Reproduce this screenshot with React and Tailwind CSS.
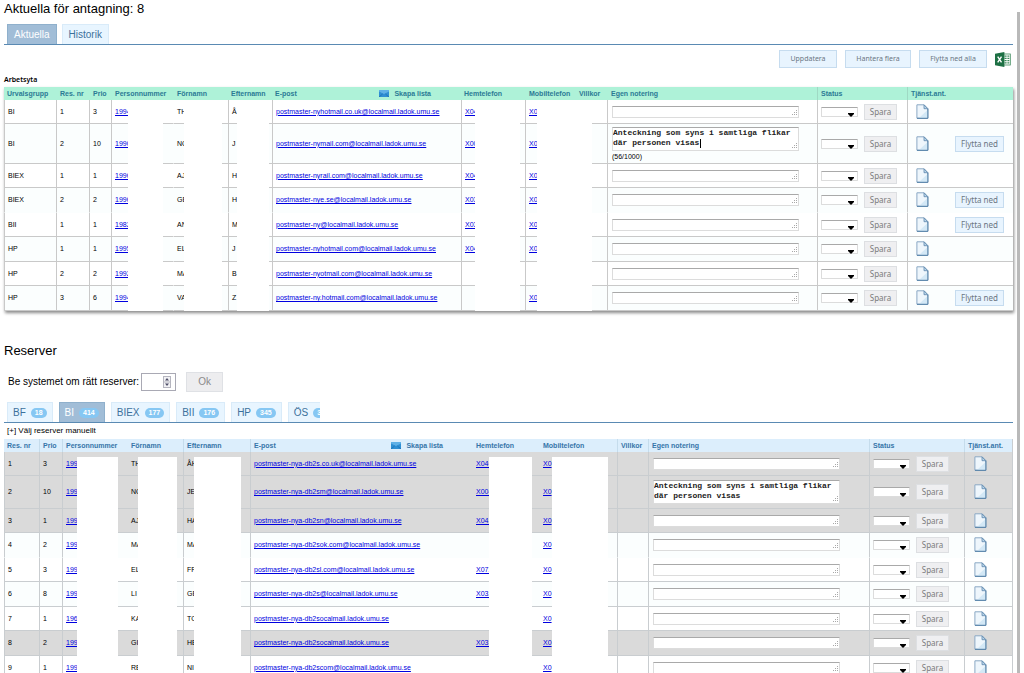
import { useState } from 'react'

const NOTE = 'Anteckning som syns i samtliga flikar\ndär personen visas'

const workRows = [
  { group: 'BI', nr: 1, prio: 3, pnr: '1994', first: 'TH', last: 'Å', mail: 'postmaster-nyhotmail.co.uk@localmail.ladok.umu.se', home: 'X04', mobile: 'X0' },
  { group: 'BI', nr: 2, prio: 10, pnr: '1990', first: 'NO', last: 'J', mail: 'postmaster-nymail.com@localmail.ladok.umu.se', home: 'X00', mobile: 'X0', note: NOTE, count: '(56/1000)', move: true },
  { group: 'BIEX', nr: 1, prio: 1, pnr: '1996', first: 'AJ', last: 'H', mail: 'postmaster-nyrail.com@localmail.ladok.umu.se', home: 'X04', mobile: 'X0' },
  { group: 'BIEX', nr: 2, prio: 2, pnr: '1996', first: 'GE', last: 'H', mail: 'postmaster-nye.se@localmail.ladok.umu.se', home: 'X03', mobile: 'X0', move: true, noLine: true },
  { group: 'BII', nr: 1, prio: 1, pnr: '1982', first: 'AN', last: 'M', mail: 'postmaster-ny@localmail.ladok.umu.se', home: 'X03', mobile: 'X0', move: true },
  { group: 'HP', nr: 1, prio: 1, pnr: '1995', first: 'EL', last: 'J', mail: 'postmaster-nyhotmail.com@localmail.ladok.umu.se', home: 'X04', mobile: 'X0' },
  { group: 'HP', nr: 2, prio: 2, pnr: '1992', first: 'MA', last: 'B', mail: 'postmaster-nyotmail.com@localmail.ladok.umu.se', home: '', mobile: '' },
  { group: 'HP', nr: 3, prio: 6, pnr: '1994', first: 'VA', last: 'Z', mail: 'postmaster-ny.hotmail.com@localmail.ladok.umu.se', home: '', mobile: 'X0', move: true },
]

const reserveRows = [
  { nr: 1, prio: 3, pnr: '199', first: 'TH', last: 'ÅH', mail: 'postmaster-nya-db2s.co.uk@localmail.ladok.umu.se', home: 'X046', mobile: 'X0', gray: true },
  { nr: 2, prio: 10, pnr: '199', first: 'NO', last: 'JE', mail: 'postmaster-nya-db2sm@localmail.ladok.umu.se', home: 'X004', mobile: 'X0', note: NOTE, gray: true },
  { nr: 3, prio: 1, pnr: '199', first: 'AJ', last: 'HA', mail: 'postmaster-nya-db2sn@localmail.ladok.umu.se', home: 'X042', mobile: 'X0', gray: true },
  { nr: 4, prio: 2, pnr: '199', first: 'MA', last: 'MA', mail: 'postmaster-nya-db2sok.com@localmail.ladok.umu.se', home: '', mobile: 'X0', noLine: true },
  { nr: 5, prio: 3, pnr: '199', first: 'EL', last: 'FR', mail: 'postmaster-nya-db2sl.com@localmail.ladok.umu.se', home: 'X072', mobile: 'X0' },
  { nr: 6, prio: 8, pnr: '199', first: 'LI', last: 'GE', mail: 'postmaster-nya-db2s@localmail.ladok.umu.se', home: 'X032', mobile: 'X0' },
  { nr: 7, prio: 1, pnr: '196', first: 'KA', last: 'TO', mail: 'postmaster-nya-db2socalmail.ladok.umu.se', home: '', mobile: 'X0' },
  { nr: 8, prio: 2, pnr: '199', first: 'GI', last: 'HE', mail: 'postmaster-nya-db2socalmail.ladok.umu.se', home: 'X035', mobile: 'X0', gray: true },
  { nr: 9, prio: 1, pnr: '199', first: 'RE', last: 'NI', mail: 'postmaster-nya-db2scom@localmail.ladok.umu.se', home: '', mobile: 'X0' },
]

const groups = [
  { name: 'BF', count: 18 },
  { name: 'BI', count: 414 },
  { name: 'BIEX', count: 177 },
  { name: 'BII', count: 176 },
  { name: 'HP', count: 345 },
  { name: 'ÖS', count: 312 },
]

function MailIcon() {
  return (
    <svg width="10" height="7" viewBox="0 0 10 7" aria-hidden="true">
      <rect width="10" height="7" fill="#2f8fd3" />
      <path d="M0 0h10v1.5L5 4 0 1.5z" fill="#5fb0e6" />
      <path d="M0 7l3.6-3M10 7L6.4 4" stroke="#1b6bb0" strokeWidth=".7" />
    </svg>
  )
}

function DocIcon() {
  return (
    <svg width="13" height="15" viewBox="0 0 13 15" className="mb-px block" aria-hidden="true">
      <path d="M.9.8h7.3l3.6 3.8v9.6H.9z" fill="#eef6fc" stroke="#8aa9c4" />
      <path d="M3 14l8.6-8v8z" fill="#d3e8f6" />
      <path d="M11.9 4.8v9.5H1" fill="none" stroke="#4f7da5" />
      <path d="M8 .9v3.8h3.8z" fill="#b9d5ea" stroke="#5f88ad" strokeWidth=".8" />
    </svg>
  )
}

function ExcelIcon() {
  return (
    <svg width="16" height="15" viewBox="0 0 16 15" className="block" aria-hidden="true">
      <rect x="8" y="2" width="7.3" height="11" fill="#fff" stroke="#3c8a5c" strokeWidth=".8" />
      <path d="M9.5 4.2h4.8M9.5 6.4h4.8M9.5 8.6h4.8M9.5 10.8h4.8" stroke="#3c8a5c" strokeWidth="1.2" />
      <path d="M12 3v9" stroke="#fff" strokeWidth=".8" />
      <path d="M0 1.7L9.4 0v15L0 13.3z" fill="#1d7044" />
      <path d="M2.7 4.7l3.8 5.6M6.5 4.7l-3.8 5.6" stroke="#fff" strokeWidth="1.4" />
    </svg>
  )
}

// white strip over personal data
function Mask({ className }) {
  return <span className={`absolute -bottom-px z-10 bg-white ${className}`} />
}

function Note({ id, row, cursor }) {
  const [text, setText] = useState(row.note || '')
  return (
    <div className="pl-px">
      <div className="relative w-[187px]">
        <textarea
          aria-label={`Egen notering ${id}`}
          value={text}
          onChange={(e) => setText(e.target.value)}
          className={`block w-full resize-none overflow-hidden border border-[#dcdcdc] border-t-[#a9a9a9] bg-white font-['Liberation_Mono',monospace] text-[8px] leading-[10px] font-bold text-[#222] outline-none ${row.note ? 'h-6' : 'h-3'}`}
        />
        {cursor && <span className="absolute top-3 left-[88px] h-[9px] w-px bg-black" />}
        <svg width="7" height="7" viewBox="0 0 7 7" className="pointer-events-none absolute right-px bottom-0.5" aria-hidden="true">
          <path d="M5 1.5h1M3 3.5h1M5 3.5h1M1 5.5h1M3 5.5h1M5 5.5h1" stroke="#a8a8a8" />
        </svg>
      </div>
      {row.count && <div className="pt-px text-[7px] leading-[9px]">{row.count}</div>}
    </div>
  )
}

function Status({ id }) {
  return (
    <div className="flex items-center gap-1.5">
      <div className="relative w-[37px]">
        <select aria-label={`Status ${id}`} className="block h-2.5 w-full appearance-none rounded-[1px] border border-[#dcdcdc] border-t-[#a9a9a9] bg-white text-[7px]">
          <option></option>
        </select>
        <svg width="6" height="4" viewBox="0 0 6 4" className="pointer-events-none absolute right-1 bottom-0" aria-hidden="true">
          <path d="M0 0h6v1L3 4 0 1z" fill="#000" />
        </svg>
      </div>
      <button className="h-4 w-[33px] border border-[#dddfe2] bg-[#efeff1] font-['Noto_Sans',sans-serif] text-[8px] leading-none text-[#7b7b7b]">Spara</button>
    </div>
  )
}

function MailHeader() {
  return (
    <div className="flex items-center justify-between pr-[30px]">
      E-post
      <a href="#lista" className="flex items-center gap-[5px]">
        <MailIcon />
        Skapa lista
      </a>
    </div>
  )
}

const th = 'h-[13px] pl-[3px] text-left font-bold whitespace-nowrap'
const link = 'text-[#0000e0] underline'

function WorkTable() {
  const line = 'border-l border-[#c9c9c9]'
  return (
    <table className="w-full table-fixed border-separate border-spacing-0 text-[7px] leading-[10px] shadow-[1px_2px_3px_#8a8a8a]">
      <colgroup>
        <col className="w-[52px]" />
        <col className="w-[33px]" />
        <col className="w-[22px]" />
        <col className="w-[62px]" />
        <col className="w-[55px]" />
        <col className="w-[44px]" />
        <col className="w-[189px]" />
        <col className="w-[64px]" />
        <col className="w-[51px]" />
        <col className="w-[31px]" />
        <col />
        <col className="w-[90px]" />
        <col className="w-[106px]" />
      </colgroup>
      <thead className="bg-[#aef2d8] text-[#2b7a95]">
        <tr>
          <th className={th}>Urvalsgrupp</th>
          <th className={`${th} border-l border-transparent`}>Res. nr</th>
          <th className={`${th} border-l border-transparent`}>Prio</th>
          <th className={`${th} border-l border-transparent`}>Personnummer</th>
          <th className={`${th} border-l border-transparent`}>Förnamn</th>
          <th className={th}>Efternamn</th>
          <th className={th}><MailHeader /></th>
          <th className={th}>Hemtelefon</th>
          <th className={`${th} border-l border-transparent`}>Mobiltelefon</th>
          <th className={th}>Villkor</th>
          <th className={`${th} border-l border-transparent`}>Egen notering</th>
          <th className={`${th} border-l border-[#9fd9c4]`}>Status</th>
          <th className={`${th} border-l border-[#9fd9c4]`}>Tjänst.ant.</th>
        </tr>
      </thead>
      <tbody>
        {workRows.map((row, i) => {
          const td = `relative h-full border-b p-0 pl-[3px] ${row.noLine ? 'border-b-transparent' : 'border-b-[#c9c9c9]'}`
          return (
            <tr key={i} className={`${row.note ? 'h-10' : 'h-6 even:h-[25px]'} bg-white even:bg-[#fbfefe]`}>
              <td className={`${td} ${line}`}>{row.group}</td>
              <td className={`${td} ${line}`}>{row.nr}</td>
              <td className={`${td} ${line}`}>{row.prio}</td>
              <td className={`${td} ${line}`}>
                <a href="#person" className={link}>{row.pnr}</a>
                <Mask className="top-0 left-4 w-[35px]" />
              </td>
              <td className={`${td} border-l border-l-transparent`}>
                {row.first}
                <Mask className="top-0 left-2.5 w-[38px]" />
              </td>
              <td className={`${td} ${line}`}>
                {row.last}
                <Mask className="top-0 left-2 w-8" />
              </td>
              <td className={`${td} ${line} whitespace-nowrap`}><a href="#mail" className={link}>{row.mail}</a></td>
              <td className={`${td} ${line}`}>
                <a href="#hem" className={link}>{row.home}</a>
                <Mask className="top-0 left-[13px] w-[45px]" />
              </td>
              <td className={`${td} ${line}`}>
                <a href="#mobil" className={link}>{row.mobile}</a>
                <Mask className="top-0 left-[11px] w-[55px]" />
              </td>
              <td className={td}></td>
              <td className={`${td} ${line}`}><Note id={`arbetsyta ${i + 1}`} row={row} cursor={!!row.count} /></td>
              <td className={`${td} ${line}`}><Status id={`arbetsyta ${i + 1}`} /></td>
              <td className={`${td} ${line}`}>
                <div className="flex items-center justify-between pr-[9px] pl-[5px]">
                  <button aria-label="Tjänsteanteckning"><DocIcon /></button>
                  {row.move && (
                    <button className="h-4 w-[49px] border border-[#c6dcef] bg-[#e8f4fe] font-['Noto_Sans',sans-serif] text-[8px] leading-none text-[#6b7683]">Flytta ned</button>
                  )}
                </div>
              </td>
            </tr>
          )
        })}
      </tbody>
    </table>
  )
}

function ReserveTable() {
  const line = 'border-l border-[#c9cdd0]'
  const head = `${th} border-l border-[#c5dcec]`
  return (
    <table className="w-full table-fixed border-separate border-spacing-0 border-r border-[#c9cdd0] text-[7px] leading-[10px]">
      <colgroup>
        <col className="w-[35px]" />
        <col className="w-[23px]" />
        <col className="w-[66px]" />
        <col className="w-[55px]" />
        <col className="w-[67px]" />
        <col className="w-[223px]" />
        <col className="w-[67px]" />
        <col className="w-[77px]" />
        <col className="w-[31px]" />
        <col />
        <col className="w-[95px]" />
        <col className="w-[48px]" />
      </colgroup>
      <thead className="bg-[#dceefc] text-[#3675a9]">
        <tr>
          <th className={th}>Res. nr</th>
          <th className={head}>Prio</th>
          <th className={head}>Personnummer</th>
          <th className={th}>Förnamn</th>
          <th className={head}>Efternamn</th>
          <th className={head}><MailHeader /></th>
          <th className={th}>Hemtelefon</th>
          <th className={th}>Mobiltelefon</th>
          <th className={head}>Villkor</th>
          <th className={head}>Egen notering</th>
          <th className={head}>Status</th>
          <th className={head}>Tjänst.ant.</th>
        </tr>
      </thead>
      <tbody>
        {reserveRows.map((row, i) => {
          const td = `relative h-full border-b p-0 pl-[3px] ${row.noLine ? 'border-b-transparent' : 'border-b-[#c9cdd0]'}`
          const top = i === 0 ? 'top-[5px]' : 'top-0'
          const bg = row.gray ? 'bg-[#dadada]' : 'bg-white even:bg-[#fbfefe]'
          return (
            <tr key={row.nr} className={`${row.note ? 'h-[33px]' : 'h-6 even:h-[25px]'} ${bg}`}>
              <td className={`${td} ${line}`}>{row.nr}</td>
              <td className={`${td} ${line}`}>{row.prio}</td>
              <td className={`${td} ${line}`}>
                <a href="#person" className={link}>{row.pnr}</a>
                <Mask className={`${top} left-3.5 w-[41px]`} />
              </td>
              <td className={td}>
                {row.first}
                <Mask className={`${top} left-2.5 w-[39px]`} />
              </td>
              <td className={`${td} ${line}`}>
                {row.last}
                <Mask className={`${top} left-2.5 w-[47px]`} />
              </td>
              <td className={`${td} ${line} whitespace-nowrap`}><a href="#mail" className={link}>{row.mail}</a></td>
              <td className={td}>
                <a href="#hem" className={link}>{row.home}</a>
                <Mask className={`${top} left-4 w-[43px]`} />
              </td>
              <td className={td}>
                <a href="#mobil" className={link}>{row.mobile}</a>
                <Mask className={`${top} left-3 w-14`} />
              </td>
              <td className={`${td} ${line}`}></td>
              <td className={`${td} ${line}`}><Note id={`reserv ${row.nr}`} row={row} /></td>
              <td className={`${td} ${line}`}><Status id={`reserv ${row.nr}`} /></td>
              <td className={`${td} ${line}`}>
                <button aria-label="Tjänsteanteckning" className="ml-1.5 block"><DocIcon /></button>
              </td>
            </tr>
          )
        })}
      </tbody>
    </table>
  )
}

export default function App() {
  const [view, setView] = useState('Aktuella')
  const [group, setGroup] = useState('BI')
  const [amount, setAmount] = useState('')

  const tab = 'border border-b-0 text-[10px]'
  const tabOn = 'border-[#8fb0cc] bg-[#a1bdd7] text-white'
  const tabOff = 'border-[#d9ebf9] bg-[#e8f5ff] text-[#3c719c]'
  const action = "h-[18px] border border-[#c6dcef] bg-[#e8f4fe] font-['Noto_Sans',sans-serif] text-[7px] text-[#6b7683]"

  return (
    <div className="flex h-screen overflow-hidden bg-white px-1 font-['Liberation_Sans',Arial,sans-serif] text-black">
      <main className="min-w-0 flex-1">
        <h1 className="text-[13px] leading-[18px]">Aktuella för antagning: 8</h1>
        <nav className="mt-1.5 flex gap-[5px] border-b border-[#5a8ab3] pl-[3px]">
          {['Aktuella', 'Historik'].map((name) => (
            <button key={name} onClick={() => setView(name)} className={`h-5 px-1.5 ${tab} ${view === name ? tabOn : tabOff}`}>
              {name}
            </button>
          ))}
        </nav>

        <div className="mt-[5px] flex items-center justify-end gap-2 pr-0.5">
          <button className={`${action} w-[58px]`}>Uppdatera</button>
          <button className={`${action} w-[66px]`}>Hantera flera</button>
          <button className={`${action} w-[68px]`}>Flytta ned alla</button>
          <button aria-label="Exportera till Excel"><ExcelIcon /></button>
        </div>

        <h2 className="mt-[7px] mb-0.5 font-['Noto_Sans',sans-serif] text-[7px] leading-[10px] font-semibold">Arbetsyta</h2>
        <WorkTable />

        <h1 className="mt-[31px] text-[13px] leading-[18px]">Reserver</h1>
        <form className="mt-3 flex items-center pl-1" onSubmit={(e) => e.preventDefault()}>
          <label htmlFor="amount" className="text-[10px] leading-5">Be systemet om rätt reserver:</label>
          <div className="relative ml-0.5 w-[35px]">
            <input
              id="amount"
              value={amount}
              onChange={(e) => setAmount(e.target.value)}
              className="block h-[18px] w-full border border-[#a9a9b4] bg-white pl-1 text-[9px]"
            />
            <svg width="8" height="12" viewBox="0 0 8 12" className="pointer-events-none absolute top-[3px] right-[5px]" aria-hidden="true">
              <rect x=".5" y=".5" width="7" height="11" fill="#f1f1f4" stroke="#b5b5bf" />
              <path d="M0 6h8" stroke="#b5b5bf" />
              <path d="M2 4.5L4 2l2 2.5zM2 7.5L4 10l2-2.5z" fill="#4d4d66" />
            </svg>
          </div>
          <button className="ml-2.5 h-5 w-[37px] border border-[#dfe1e5] bg-[#ededef] text-[10px] leading-none text-[#8a8a8a]">Ok</button>
        </form>

        <nav className="mt-2.5 border-b border-[#5a8ab3] pl-[3px]">
          <div className="flex max-w-[313px] gap-1.5 overflow-hidden">
            {groups.map((g) => (
              <button
                key={g.name}
                onClick={() => setGroup(g.name)}
                className={`flex h-5 shrink-0 items-center gap-[5px] px-[5px] ${tab} ${group === g.name ? tabOn : tabOff}`}
              >
                {g.name}
                <span className="rounded-full bg-[#86c7f3] px-1 text-[7px] leading-[10px] font-bold text-white">{g.count}</span>
              </button>
            ))}
          </div>
        </nav>
        <button className="my-[3px] block pl-[3px] text-[8px] leading-[10px]">[+] Välj reserver manuellt</button>
        <ReserveTable />
      </main>
      <div className="mt-3 ml-1 w-[3px] bg-[#b9b9b9]" />
    </div>
  )
}
